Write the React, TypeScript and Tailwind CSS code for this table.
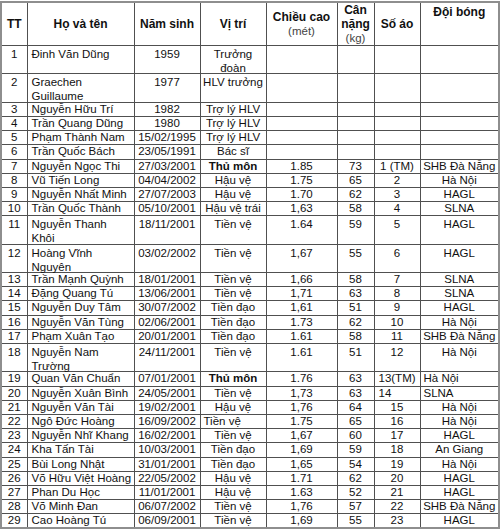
import React from "react";

type Row = {
  tt: string;
  name: string;
  year: string;
  pos: string;
  posBold?: boolean;
  posLeft?: boolean;
  h?: string;
  w?: string;
  no?: string;
  club?: string;
  leftTail?: boolean;
  tall?: boolean;
};

const rows: Row[] = [
  { tt: "1", name: "Đinh Văn Dũng", year: "1959", pos: "Trưởng\nđoàn", tall: true },
  { tt: "2", name: "Graechen\nGuillaume", year: "1977", pos: "HLV trưởng", tall: true },
  { tt: "3", name: "Nguyễn Hữu Trí", year: "1982", pos: "Trợ lý HLV" },
  { tt: "4", name: "Trần Quang Dũng", year: "1980", pos: "Trợ lý HLV" },
  { tt: "5", name: "Phạm Thành Nam", year: "15/02/1995", pos: "Trợ lý HLV" },
  { tt: "6", name: "Trần Quốc Bách", year: "23/05/1991", pos: "Bác sĩ" },
  { tt: "7", name: "Nguyễn Ngọc Thi", year: "27/03/2001", pos: "Thủ môn", posBold: true, h: "1.85", w: "73", no: "1 (TM)", club: "SHB Đà Nẵng" },
  { tt: "8", name: "Vũ Tiến Long", year: "04/04/2002", pos: "Hậu vệ", h: "1.75", w: "65", no: "2", club: "Hà Nội" },
  { tt: "9", name: "Nguyễn Nhất Minh", year: "27/07/2003", pos: "Hậu vệ", h: "1.70", w: "62", no: "3", club: "HAGL" },
  { tt: "10", name: "Trần Quốc Thành", year: "05/10/2001", pos: "Hậu vệ trái", h: "1,63", w: "58", no: "4", club: "SLNA" },
  { tt: "11", name: "Nguyễn Thanh\nKhôi", year: "18/11/2001", pos: "Tiền vệ", h: "1.64", w: "59", no: "5", club: "HAGL", tall: true },
  { tt: "12", name: "Hoàng Vĩnh\nNguyên", year: "03/02/2002", pos: "Tiền vệ", h: "1,67", w: "55", no: "6", club: "HAGL", tall: true },
  { tt: "13", name: "Trần Mạnh Quỳnh", year: "18/01/2001", pos: "Tiền vệ", h: "1,66", w: "58", no: "7", club: "SLNA" },
  { tt: "14", name: "Đặng Quang Tú", year: "13/06/2001", pos: "Tiền vệ", h: "1,71", w: "63", no: "8", club: "SLNA" },
  { tt: "15", name: "Nguyễn Duy Tâm", year: "30/07/2002", pos: "Tiền đạo", h: "1,61", w: "51", no: "9", club: "HAGL" },
  { tt: "16", name: "Nguyễn Văn Tùng", year: "02/06/2001", pos: "Tiền đạo", h: "1.73", w: "62", no: "10", club: "Hà Nội" },
  { tt: "17", name: "Phạm Xuân Tạo", year: "20/01/2001", pos: "Tiền đạo", h: "1.61", w: "58", no: "11", club: "SHB Đà Nẵng" },
  { tt: "18", name: "Nguyễn Nam\nTrường", year: "24/11/2001", pos: "Tiền vệ", h: "1.61", w: "51", no: "12", club: "Hà Nội", tall: true },
  { tt: "19", name: "Quan Văn Chuẩn", year: "07/01/2001", pos: "Thủ môn", posBold: true, h: "1.76", w: "63", no: "13(TM)", club: "Hà Nội", leftTail: true },
  { tt: "20", name: "Nguyễn Xuân Bình", year: "24/05/2001", pos: "Tiền vệ", h: "1,73", w: "63", no: "14", club: "SLNA", leftTail: true },
  { tt: "21", name: "Nguyễn Văn Tài", year: "19/02/2001", pos: "Hậu vệ", h: "1,76", w: "64", no: "15", club: "Hà Nội" },
  { tt: "22", name: "Ngô Đức Hoàng", year: "16/09/2002", pos: "Tiền vệ", posLeft: true, h: "1.75", w: "65", no: "16", club: "Hà Nội" },
  { tt: "23", name: "Nguyễn Nhĩ Khang", year: "16/02/2001", pos: "Tiền vệ", h: "1,67", w: "60", no: "17", club: "HAGL" },
  { tt: "24", name: "Kha Tấn Tài", year: "10/03/2001", pos: "Tiền đạo", h: "1,69", w: "59", no: "18", club: "An Giang" },
  { tt: "25", name: "Bùi Long Nhật", year: "31/01/2001", pos: "Tiền đạo", h: "1,65", w: "54", no: "19", club: "Hà Nội" },
  { tt: "26", name: "Võ Hữu Việt Hoàng", year: "22/05/2002", pos: "Hậu vệ", h: "1.71", w: "62", no: "20", club: "HAGL" },
  { tt: "27", name: "Phan Du Học", year: "11/01/2001", pos: "Hậu vệ", h: "1.63", w: "52", no: "21", club: "HAGL" },
  { tt: "28", name: "Võ Minh Đan", year: "06/07/2002", pos: "Tiền vệ", h: "1,76", w: "57", no: "22", club: "SHB Đà Nẵng" },
  { tt: "29", name: "Cao Hoàng Tú", year: "06/09/2001", pos: "Tiền vệ", h: "1,69", w: "55", no: "23", club: "HAGL" },
];

const td = "border border-[#505050] p-0 align-top";

function Cell({ tall, className, children }: { tall?: boolean; className?: string; children?: React.ReactNode }) {
  return (
    <td className={td}>
      <div
        className={
          (tall ? "h-[27.4px] leading-[14px] pt-[1px] whitespace-pre-line " : "h-[13.2px] leading-[13.2px] whitespace-nowrap ") +
          "overflow-visible " +
          (className || "")
        }
      >
        {children}
      </div>
    </td>
  );
}

const th = "border border-[#505050] p-0 align-middle font-bold text-center leading-[14px] text-[12px]";

export default function App() {
  return (
    <div
      className="w-[500px] h-[530px] bg-white text-[#111] overflow-hidden"
      style={{ fontFamily: '"Liberation Sans", Arial, sans-serif' }}
    >
      <div className="pt-[1px]">
        <table className="table-fixed border-collapse w-[498px] border-2 border-[#8e8e8e] text-[11.5px]">
          <colgroup>
            <col className="w-[26px]" />
            <col className="w-[107px]" />
            <col className="w-[66px]" />
            <col className="w-[66px]" />
            <col className="w-[71px]" />
            <col className="w-[37px]" />
            <col className="w-[46px]" />
            <col className="w-[79px]" />
          </colgroup>
          <thead>
            <tr>
              <th className={th + " h-[41px]"}>TT</th>
              <th className={th}>Họ và tên</th>
              <th className={th}>Năm sinh</th>
              <th className={th}>Vị trí</th>
              <th className={th}>
                <div>Chiều cao</div>
                <div className="font-normal text-[11.5px] text-[#444]">(mét)</div>
              </th>
              <th className={th}>
                <div>Cân</div>
                <div>nặng</div>
                <div className="font-normal text-[11.5px] text-[#444]">(kg)</div>
              </th>
              <th className={th}>Số áo</th>
              <th className="border border-[#505050] p-0 align-top font-bold text-center leading-[14px] text-[12px]">
                <div className="pt-[2px]">Đội bóng</div>
              </th>
            </tr>
          </thead>
          <tbody>
            {rows.map((r) => (
              <tr key={r.tt}>
                <Cell tall={r.tall} className="text-center">{r.tt}</Cell>
                <Cell tall={r.tall} className="pl-[4px] text-left">{r.name}</Cell>
                <Cell tall={r.tall} className="text-center">{r.year}</Cell>
                <Cell
                  tall={r.tall}
                  className={(r.posLeft ? "text-left pl-[3px] " : "text-center ") + (r.posBold ? "font-bold" : "")}
                >
                  {r.pos}
                </Cell>
                <Cell tall={r.tall} className="text-center">{r.h}</Cell>
                <Cell tall={r.tall} className="text-center">{r.w}</Cell>
                <Cell tall={r.tall} className={r.leftTail ? "text-left pl-[4px]" : "text-center"}>{r.no}</Cell>
                <Cell tall={r.tall} className={r.leftTail ? "text-left pl-[3px]" : "text-center"}>{r.club}</Cell>
              </tr>
            ))}
          </tbody>
        </table>
      </div>
    </div>
  );
}
